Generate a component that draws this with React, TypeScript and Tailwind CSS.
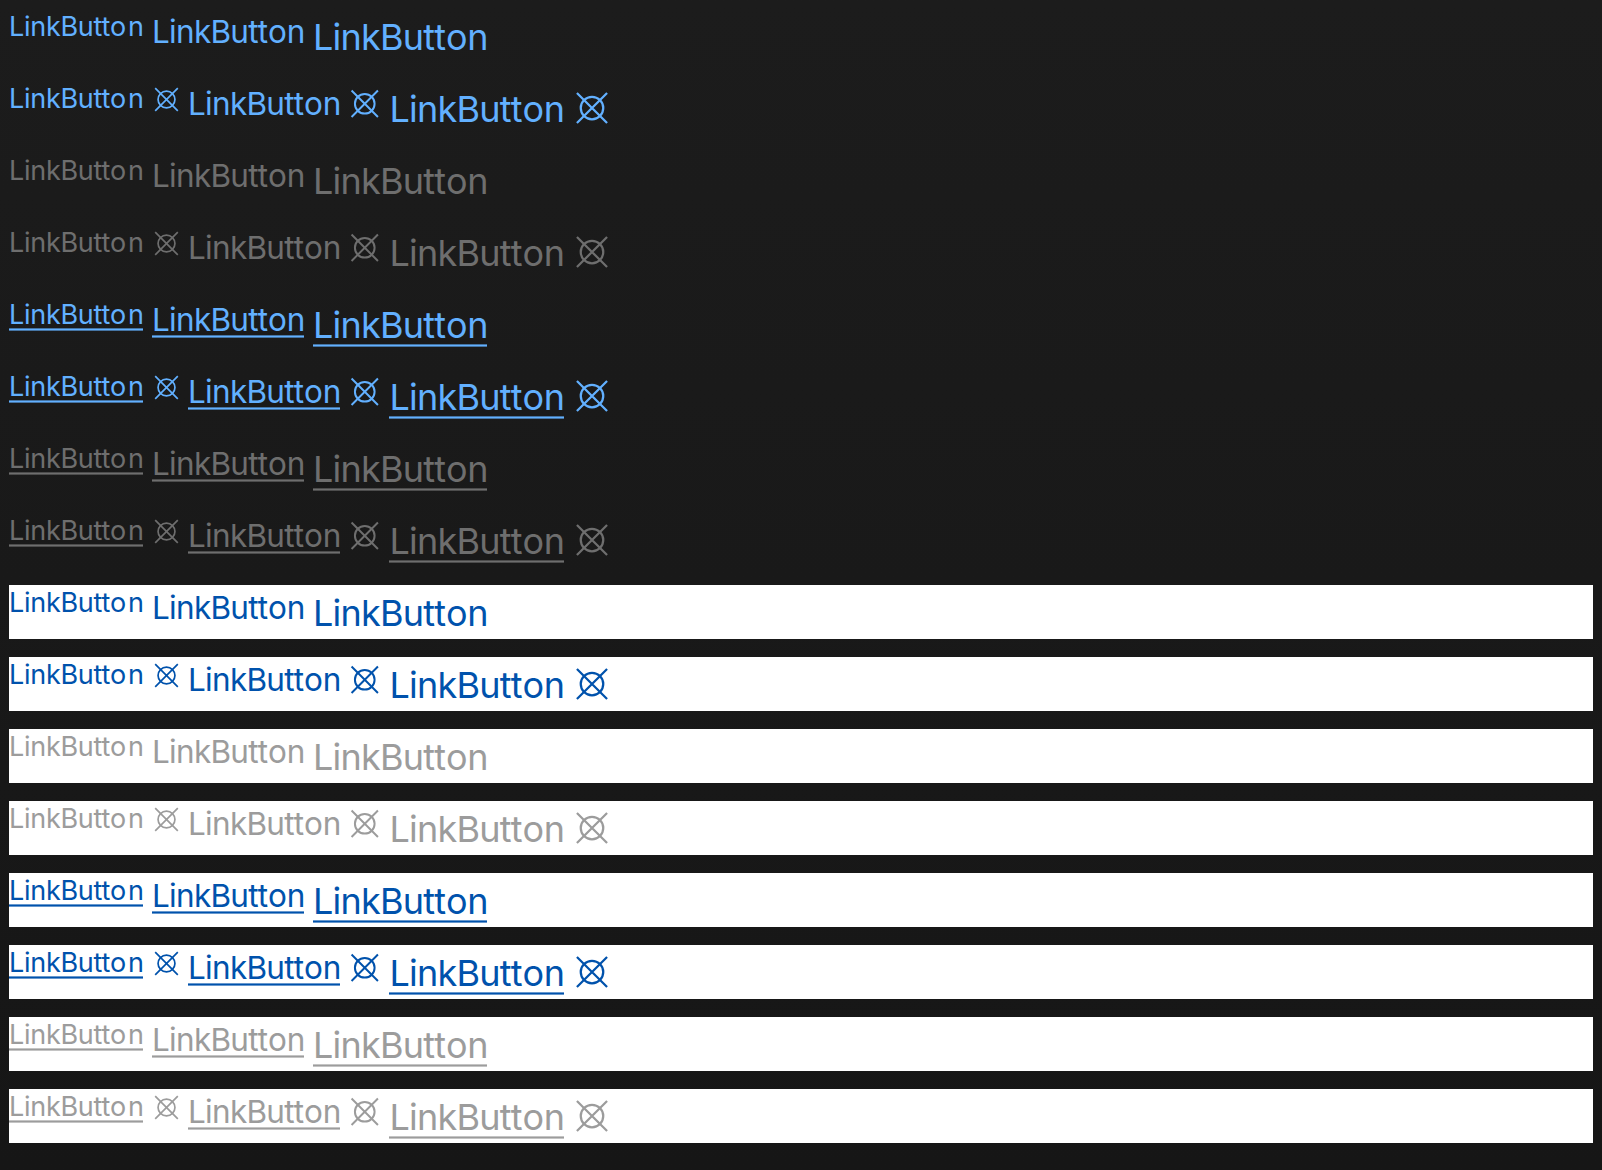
const sizes = [
  {
    text: 'h-[36px] w-[134px] text-[27px] leading-[36px] tracking-[-0.28px] after:top-[32px]',
    icon: 'size-[27px] ml-px -mr-px',
    box: 'h-[36px]',
    tt: '',
    o: 'tracking-[1.7px]',
  },
  {
    text: 'h-[45px] w-[151.9px] text-[31.5px] leading-[45px] tracking-[-0.72px] after:top-[39px]',
    icon: 'size-[31.5px]',
    box: 'h-[45px]',
    tt: 'tracking-[0px]',
    o: 'tracking-[-0.3px]',
  },
  {
    text: 'h-[54px] w-[174.3px] text-[36px] leading-[56px] tracking-[-0.76px] after:top-[48px]',
    icon: 'size-[36px] ml-px -mr-px',
    box: 'h-[54px]',
    tt: 'tracking-[0px]',
    o: 'tracking-[-0.3px]',
  },
];

const underlineClass =
  "after:absolute after:inset-x-0 after:h-px after:bg-current after:content-[''] after:shadow-[0_1px_color-mix(in_srgb,currentColor_60%,transparent),0_-1px_color-mix(in_srgb,currentColor_60%,transparent)]";

function TargetIcon({ className }: { className: string }) {
  return (
    <svg viewBox="0 0 16 16" fill="none" stroke="currentColor" strokeWidth="1" className={`shrink-0 ${className}`}>
      <circle cx="8" cy="8" r="5" />
      <path d="M1.3 1.3 14.7 14.7M14.7 1.3 1.3 14.7" />
    </svg>
  );
}

function LinkRow({ icon, underline, color, bg }: { icon: boolean; underline: boolean; color: string; bg: string }) {
  return (
    <div className={`flex h-[54px] items-start gap-[9px] ${color} ${bg}`}>
      {sizes.map((s) => (
        <a key={s.text} className={`flex items-center gap-[9px] ${s.box}`}>
          <span className={`relative block shrink-0 whitespace-nowrap ${s.text} ${underline ? underlineClass : ''}`}>
            LinkBu<span className={s.tt}>tt</span><span className={s.o}>o</span>n
          </span>
          {icon && <TargetIcon className={s.icon} />}
        </a>
      ))}
    </div>
  );
}

const themes = [
  { bg: '', colors: ['text-[#62b0ff]', 'text-[#6e6e6e]'] },
  { bg: 'bg-white', colors: ['text-[#0052ac]', 'text-[#9c9c9c]'] },
];

export default function App() {
  return (
    <div className="flex h-[1170px] w-[1602px] flex-col gap-[18px] bg-linear-to-b from-[#1c1c1c] to-[#161616] p-[9px] font-['Inter',sans-serif]">
      {themes.flatMap((t) =>
        [false, true].flatMap((underline) =>
          t.colors.flatMap((color) =>
            [false, true].map((icon) => (
              <LinkRow key={`${color}${underline}${icon}`} icon={icon} underline={underline} color={color} bg={t.bg} />
            )),
          ),
        ),
      )}
    </div>
  );
}
